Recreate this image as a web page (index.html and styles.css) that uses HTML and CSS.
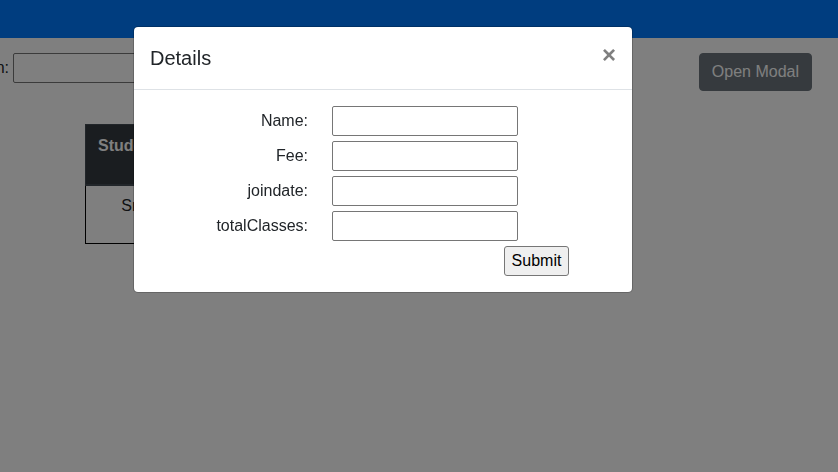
FILE: index.html
```html
<!DOCTYPE html>
<html lang="en">
<head>
<meta charset="utf-8">
<title>Details</title>
<link rel="stylesheet" href="styles.css">
</head>
<body>
<header class="navbar"></header>
<main>
  <div class="toolbar">
    <label class="search-label" for="search">n:</label>
    <input class="field" id="search" type="text">
    <button class="open-button" type="button">Open Modal</button>
  </div>
  <table class="students">
    <thead><tr><th>Student</th></tr></thead>
    <tbody><tr><td>Sr</td></tr></tbody>
  </table>
</main>
<div class="backdrop">
  <section class="modal" role="dialog" aria-modal="true" aria-labelledby="modal-title">
    <div class="modal-header">
      <h5 class="modal-title" id="modal-title">Details</h5>
      <button class="close" type="button" aria-label="Close">×</button>
    </div>
    <form class="modal-body">
      <div class="row"><label for="name">Name:</label><input class="field" id="name" type="text"></div>
      <div class="row"><label for="fee">Fee:</label><input class="field" id="fee" type="text"></div>
      <div class="row"><label for="joindate">joindate:</label><input class="field" id="joindate" type="text"></div>
      <div class="row"><label for="classes">totalClasses:</label><input class="field" id="classes" type="text"></div>
      <div class="actions"><button class="submit" type="button">Submit</button></div>
    </form>
  </section>
</div>
</body>
</html>
```
FILE: styles.css
```css
* { box-sizing: border-box; }
body {
  margin: 0;
  font: 16px/24px "Liberation Sans", Arial, sans-serif;
  color: #212529;
  background: #fff;
}
button, input { font: inherit; margin: 0; }
.navbar { height: 38px; background: #007bff; }
.toolbar {
  display: flex;
  align-items: flex-start;
  gap: 4px;
  padding: 15px 26px 0 0;
}
.search-label {
  display: flex;
  justify-content: flex-end;
  width: 9px;
  line-height: 30px;
  overflow: hidden;
}
.field {
  width: 186px;
  height: 30px;
  padding: 1px 2px;
  border: 1px solid #767676;
  border-radius: 2px;
  background: #fff;
}
.open-button {
  margin-left: auto;
  padding: 6px 12px;
  border: 1px solid #6c757d;
  border-radius: 4px;
  color: #fff;
  background: #6c757d;
}
.students {
  margin: 33px 0 0 85px;
  border-collapse: collapse;
  text-align: center;
}
.students th, .students td {
  height: 59px;
  padding: 8px 12px;
  vertical-align: top;
  border: 1px solid #000;
}
.students th {
  height: 60px;
  padding: 9px 13px 8px 12px;
  color: #fff;
  background: #343a40;
  border: 1px solid #454d55;
  border-bottom-width: 2px;
}
.students td { padding: 8px 12px 8px 14px; }
.backdrop {
  position: fixed;
  inset: 0;
  padding: 26px 72px 28px 0;
  background: rgba(0, 0, 0, 0.5);
}
.modal {
  max-width: 500px;
  margin: 0 auto;
  border: 1px solid rgba(0, 0, 0, 0.2);
  border-radius: 5px;
  background: #fff;
  background-clip: padding-box;
}
.modal-header {
  display: flex;
  justify-content: space-between;
  align-items: flex-start;
  padding: 16px;
  border-bottom: 1px solid #dee2e6;
}
.modal-title { margin: 0; font-size: 20px; font-weight: 500; line-height: 30px; }
.close {
  padding: 0;
  border: 0;
  background: none;
  color: #7f7f7f;
  font-size: 24px;
  font-weight: 700;
  line-height: 24px;
}
.modal-body { display: grid; gap: 5px; padding: 16px; }
.row {
  display: grid;
  grid-template-columns: 158px 186px;
  gap: 24px;
  line-height: 30px;
}
.row label { text-align: right; }
.actions { display: flex; justify-content: flex-end; padding-right: 47px; }
.submit {
  min-width: 65px;
  height: 30px;
  padding: 1px 6px;
  border: 1px solid #767676;
  border-radius: 3px;
  color: #000;
  background: #efefef;
}
```
